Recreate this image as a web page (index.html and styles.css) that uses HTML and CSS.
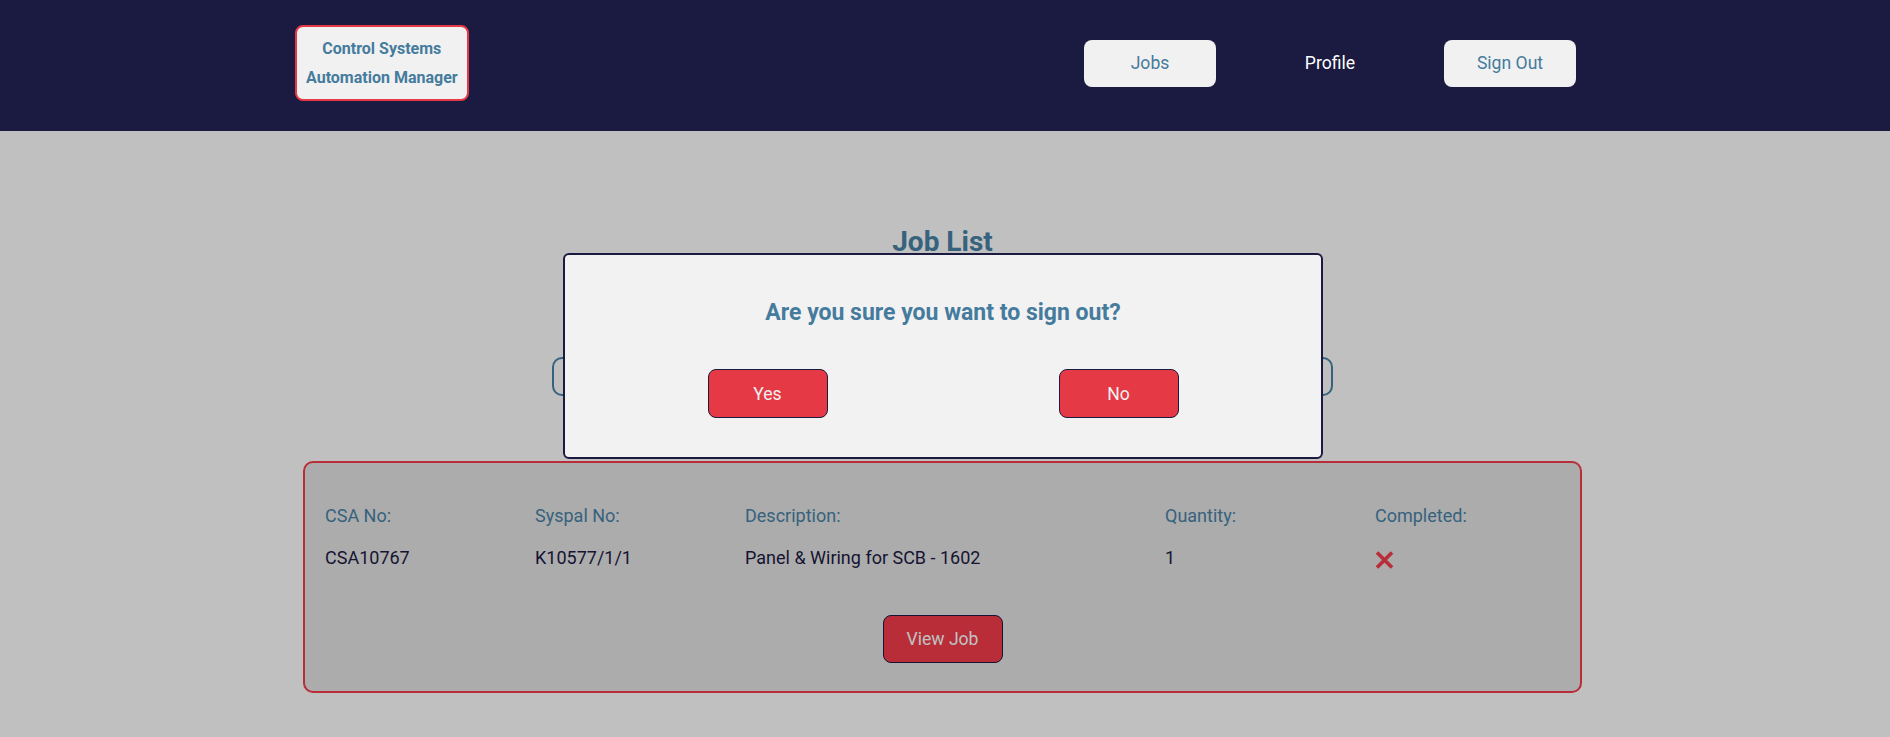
FILE: index.html
```html
<!DOCTYPE html>
<html lang="en">
<head>
<meta charset="utf-8">
<title>Job List</title>
<link rel="stylesheet" href="styles.css">
</head>
<body>
<header class="topbar">
  <a class="brand" href="#">Control Systems<br>Automation Manager</a>
  <nav class="nav">
    <a class="nav-btn" href="#">Jobs</a>
    <a class="nav-link" href="#">Profile</a>
    <a class="nav-btn" href="#">Sign Out</a>
  </nav>
</header>

<main class="page">
  <h1 class="title">Job List</h1>
  <div class="search"></div>

  <section class="job-card">
    <div class="job-grid">
      <span class="label">CSA No:</span>
      <span class="label">Syspal No:</span>
      <span class="label">Description:</span>
      <span class="label">Quantity:</span>
      <span class="label">Completed:</span>
      <span class="value">CSA10767</span>
      <span class="value">K10577/1/1</span>
      <span class="value">Panel &amp; Wiring for SCB - 1602</span>
      <span class="value">1</span>
      <span class="value">
        <svg class="cross" width="19" height="18" viewBox="0 0 19 18" aria-label="Not completed">
          <path d="M2 1.5 L17 16.5 M17 1.5 L2 16.5" stroke="#e63946" stroke-width="3.6" fill="none"/>
        </svg>
      </span>
    </div>
    <div class="card-actions">
      <button class="view-btn" type="button">View Job</button>
    </div>
  </section>
</main>

<div class="backdrop"></div>

<div class="modal" role="dialog">
  <p class="modal-text">Are you sure you want to sign out?</p>
  <div class="modal-actions">
    <button class="modal-btn" type="button">Yes</button>
    <button class="modal-btn" type="button">No</button>
  </div>
</div>
</body>
</html>
```

FILE: styles.css
```css
* { box-sizing: border-box; }

html, body {
  margin: 0;
  height: 100%;
}

body {
  font-family: Roboto, "Liberation Sans", Arial, sans-serif;
  background: #f0f0f0;
  color: #1b1a40;
  overflow: hidden;
}

/* ---------- header ---------- */
.topbar {
  position: relative;
  z-index: 3;
  height: 131px;
  background: #1b1a40;
  display: flex;
  justify-content: space-between;
  align-items: center;
  padding: 0 314px 5px 295px;
}

.brand {
  display: block;
  text-decoration: none;
  background: #f1f1f1;
  border: 2px solid #e63946;
  border-radius: 8px;
  padding: 7px 9px;
  color: #457b9d;
  font-weight: 700;
  font-size: 16px;
  line-height: 29px;
  text-align: center;
}

.nav {
  display: flex;
  gap: 48px;
  align-items: center;
}

.nav-btn,
.nav-link {
  width: 132px;
  height: 47px;
  display: flex;
  align-items: center;
  justify-content: center;
  font-size: 17.6px;
  text-decoration: none;
  border-radius: 8px;
}

.nav-btn {
  background: #f1f1f1;
  color: #457b9d;
}

.nav-link {
  color: #ffffff;
}

/* ---------- page ---------- */
.page {
  padding: 94px 5px 0 0;
  display: flex;
  flex-direction: column;
  align-items: center;
}

.title {
  margin: 0;
  font-size: 28px;
  line-height: 33px;
  font-weight: 700;
  color: #457b9d;
}

.search {
  margin-top: 99px;
  width: 781px;
  height: 39px;
  border: 2px solid #457b9d;
  border-radius: 10px;
}

.job-card {
  margin-top: 65px;
  width: 1279px;
  background: #d7d7d7;
  border: 2px solid #e63946;
  border-radius: 10px;
  padding: 42px 20px 28px;
}

.job-grid {
  display: grid;
  grid-template-columns: 210px 210px 420px 210px 1fr;
  row-gap: 21px;
  font-size: 18px;
  line-height: 21px;
}

.label {
  color: #457b9d;
}

.value {
  color: #1b1a40;
}

.cross {
  display: block;
  margin-top: 4px;
}

.card-actions {
  display: flex;
  justify-content: center;
  margin-top: 46px;
}

.view-btn {
  width: 120px;
  height: 48px;
  background: #e63946;
  color: #f1f1f1;
  border: 1px solid #1b1a40;
  border-radius: 8px;
  font-family: inherit;
  font-size: 17.6px;
}

/* ---------- overlay + modal ---------- */
.backdrop {
  position: fixed;
  left: 0;
  right: 0;
  top: 131px;
  bottom: 0;
  background: rgba(0, 0, 0, 0.2);
  z-index: 1;
}

.modal {
  position: fixed;
  z-index: 2;
  left: 563px;
  top: 253px;
  width: 760px;
  height: 206px;
  background: #f2f2f2;
  border: 2px solid #1b1a40;
  border-radius: 6px;
  padding: 44px 0 0;
}

.modal-text {
  margin: 0;
  text-align: center;
  font-size: 23px;
  line-height: 27px;
  font-weight: 700;
  color: #457b9d;
}

.modal-actions {
  margin-top: 43px;
  display: flex;
  justify-content: center;
  gap: 231px;
}

.modal-btn {
  width: 120px;
  height: 49px;
  background: #e63946;
  color: #f1f1f1;
  border: 1px solid #1b1a40;
  border-radius: 8px;
  font-family: inherit;
  font-size: 17.6px;
}
```
